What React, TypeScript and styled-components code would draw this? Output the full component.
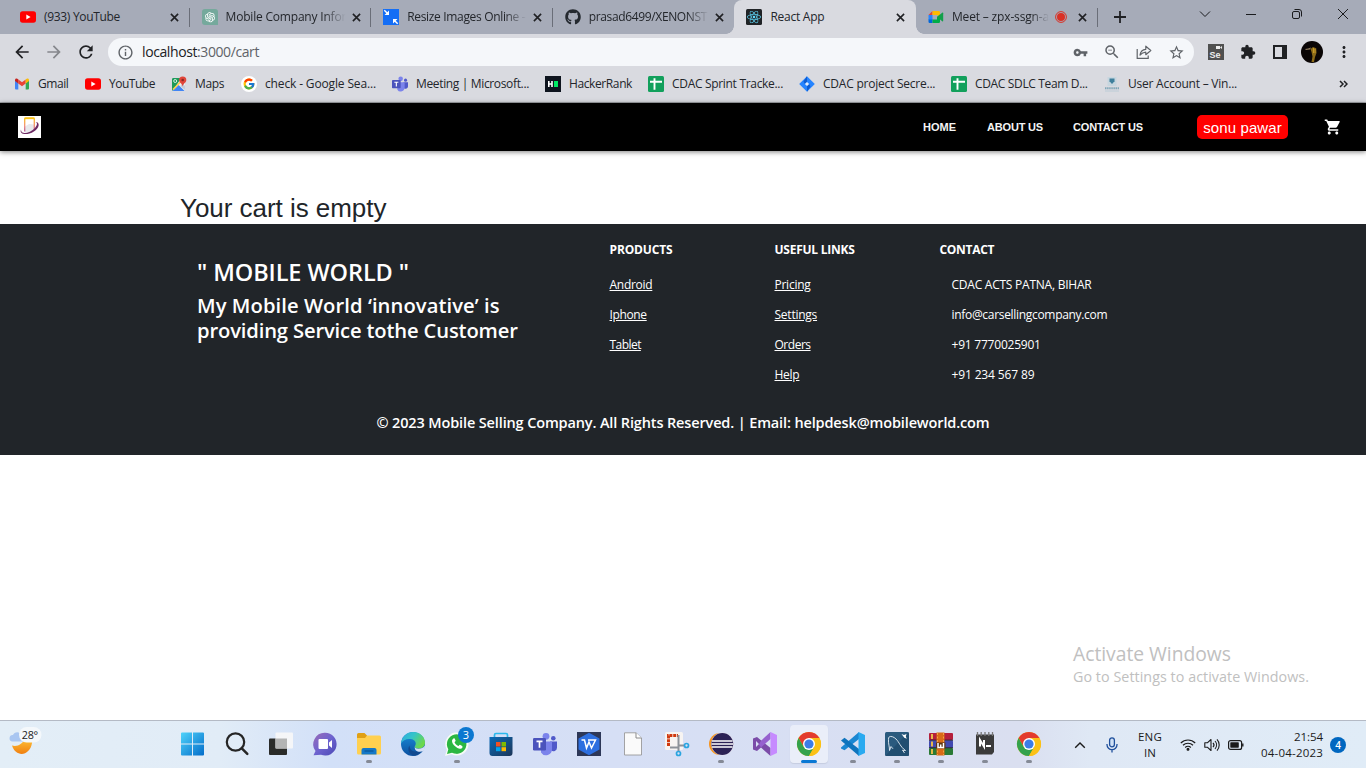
import React from 'react';
import styled, { createGlobalStyle, css } from 'styled-components';
import { FcGoogle } from 'react-icons/fc';
import { FaGithub, FaReact } from 'react-icons/fa';
import { AiOutlineOpenAI } from 'react-icons/ai';
import {
  MdArrowBack, MdArrowForward, MdRefresh, MdInfoOutline, MdVpnKey, MdZoomOut,
  MdStarBorder, MdExtension, MdMoreVert, MdShoppingCart,
} from 'react-icons/md';

const GlobalStyle = createGlobalStyle`
  * { box-sizing: border-box; }
  body { margin: 0; background: #fff; overflow: hidden; }
`;

const ui = `'Open Sans', 'Noto Sans', sans-serif`;
const arial = `'Liberation Sans', Arial, sans-serif`;

const Screen = styled.div`
  display: flex;
  flex-direction: column;
  width: 1366px;
  height: 768px;
  overflow: hidden;
  font-family: ${ui};
`;

/* ---------- browser ---------- */

const TabStrip = styled.div`
  display: flex;
  height: 34px;
  background: #a6abb8;
  padding-left: 8px;
`;

const Tab = styled.div<{ $active?: boolean; $divider?: boolean }>`
  position: relative;
  display: flex;
  align-items: center;
  width: 181.6px;
  height: 34px;
  padding: 0 10.5px 0 12px;
  font-size: 12px;
  color: #23262b;
  svg { flex: none; }
  ${p => p.$active && css`
    background: #d9dae0;
    border-radius: 8px 8px 0 0;
    &::before, &::after {
      content: '';
      position: absolute;
      bottom: 0;
      width: 8px;
      height: 8px;
    }
    &::before { left: -8px; background: radial-gradient(circle at 0 0, transparent 7.5px, #d9dae0 8px); }
    &::after { right: -8px; background: radial-gradient(circle at 100% 0, transparent 7.5px, #d9dae0 8px); }
  `}
  ${p => p.$divider && css`
    background: linear-gradient(#6a6e78, #6a6e78) no-repeat right 0 top 8px / 1px 19px;
  `}
`;

const TabTitle = styled.div<{ $fade?: boolean }>`
  flex: 1;
  min-width: 0;
  height: 20px;
  line-height: 20px;
  margin: 0 4px 0 8px;
  white-space: nowrap;
  ${p => p.$fade && css`
    mask-image: linear-gradient(90deg, #000 80%, transparent 98%);
  `}
`;

const Text = styled.span<{ $ls?: number }>`
  display: inline-block;
  white-space: nowrap;
  letter-spacing: ${p => p.$ls ?? 0}px;
`;

const RecordSlot = styled.div`
  display: flex;
  margin-right: 11px;
`;

const WindowControls = styled.div`
  display: flex;
  margin-left: auto;
`;

const Toolbar = styled.div`
  display: flex;
  align-items: center;
  height: 36px;
  padding: 0 8px 0 12px;
  background: #d9dae0;
  color: #202124;
`;

const ToolSlot = styled.div<{ $w: number; $h?: number; $color?: string }>`
  display: flex;
  align-items: center;
  justify-content: center;
  width: ${p => p.$w}px;
  height: ${p => p.$h ?? 28}px;
  flex: none;
  color: ${p => p.$color || '#202124'};
`;

const Omnibox = styled.div`
  display: flex;
  align-items: center;
  width: 1086px;
  height: 28px;
  padding: 0 2px 0 9px;
  margin-left: 12px;
  margin-right: 6px;
  border-radius: 14px;
  background: #f5f7fa;
  color: #5f6368;
  flex: none;
`;

const Url = styled.div`
  flex: 1;
  padding-left: 8px;
  font-size: 14px;
  line-height: 20px;
  color: #5f6368;
  b { font-weight: 400; color: #202124; }
`;

const Avatar = styled.div`
  width: 22px;
  height: 22px;
  border-radius: 50%;
  overflow: hidden;
  background: #0a0505;
`;

const Bookmarks = styled.div`
  display: flex;
  align-items: center;
  height: 33px;
  padding: 0 0 5px 14px;
  background: #d9dae0;
  border-bottom: 1px solid #a3a5aa;
  font-size: 12px;
  color: #23262b;
`;

const Bookmark = styled.div<{ $w: number }>`
  display: flex;
  align-items: center;
  gap: 8px;
  width: ${p => p.$w}px;
  flex: none;
  line-height: 18px;
  svg { flex: none; }
`;

/* ---------- page ---------- */

const Page = styled.main`
  display: flex;
  flex-direction: column;
  height: 617px;
  background: #fff;
`;

const NavBar = styled.nav`
  display: flex;
  align-items: center;
  height: 48px;
  flex: none;
  padding: 0 24px 0 18px;
  background: #000;
  box-shadow: 0 1px 5px rgba(0, 0, 0, .5);
  font-family: ${arial};
`;

const NavLink = styled.a<{ $w: number }>`
  width: ${p => p.$w}px;
  font-size: 11px;
  font-weight: 700;
  line-height: 16px;
  color: #f4f4f4;
`;

const NavLinks = styled.div`
  display: flex;
  margin-left: auto;
`;

const UserBadge = styled.div`
  display: flex;
  align-items: center;
  justify-content: center;
  width: 91px;
  height: 24px;
  margin-right: 36px;
  border-radius: 5px;
  background: #f00;
  color: #fff;
  font-size: 15px;
`;

const CartTitle = styled.h1`
  margin: 41px 0 0 180px;
  height: 32px;
  font: 400 26px/32px ${arial};
  color: #212529;
`;

const Footer = styled.footer`
  height: 231px;
  flex: none;
  padding-top: 16px;
  background: #212529;
  color: #fff;
`;

const FooterColumns = styled.div`
  display: grid;
  grid-template-columns: 412.5px 165px 165px 300px;
  height: 170px;
  padding-left: 197px;
`;

const Brand = styled.h2`
  margin: 16px 0 0;
  font-size: 23.5px;
  line-height: 32px;
  font-weight: 600;
`;

const Tagline = styled.h3`
  display: flex;
  flex-direction: column;
  align-items: flex-start;
  margin: 5px 0 0;
  font-size: 20.2px;
  line-height: 25px;
  font-weight: 600;
`;

const ColumnHead = styled.h6`
  margin: 0 0 10px;
  font-size: 12px;
  line-height: 20px;
  font-weight: 700;
`;

const FooterLine = styled.div<{ $link?: boolean }>`
  height: 30px;
  line-height: 30px;
  font-size: 12px;
  padding-left: ${p => (p.$link ? 0 : 12)}px;
  span { text-decoration: ${p => (p.$link ? 'underline' : 'none')}; }
`;

const Copyright = styled.div`
  text-align: center;
  margin-top: 3px;
  font-size: 14.5px;
  line-height: 20px;
  font-weight: 600;
`;

const Watermark = styled.div`
  margin: auto 0 33px 1073px;
  color: #c0c0c0;
`;

const WatermarkTitle = styled.div`
  font-size: 19.3px;
  line-height: 24px;
`;

const WatermarkText = styled.div`
  font-size: 14.3px;
  line-height: 21px;
`;

/* ---------- taskbar ---------- */

const Taskbar = styled.div`
  display: flex;
  height: 48px;
  flex: none;
  border-top: 1px solid #b4bac5;
  background: linear-gradient(90deg, #e3eef7 0, #e1ecf7 220px, #d2e0f8 330px, #d5dff6 520px, #d8dff3 800px, #dadff0 1020px, #dfe8f5 1090px, #e0ecf7 1366px);
`;

const Weather = styled.div`
  display: flex;
  width: 171px;
  flex: none;
  padding: 4px 0 0 8px;
`;

const TaskApp = styled.div<{ $active?: boolean; $running?: boolean }>`
  display: flex;
  flex-direction: column;
  align-items: center;
  width: 44px;
  height: 47px;
  flex: none;
  padding-top: 11px;
  position: relative;
  ${p => p.$active && css`
    &::before {
      content: '';
      position: absolute;
      inset: 4px 3px 5px;
      border-radius: 4px;
      background: #eaeef9;
      box-shadow: 0 1px 1px #c6cde0;
    }
  `}
  svg { position: relative; flex: none; overflow: visible; }
  &::after {
    content: '';
    position: relative;
    display: ${p => (p.$active || p.$running ? 'block' : 'none')};
    width: ${p => (p.$active ? 16 : 6)}px;
    height: 3px;
    margin-top: 4px;
    border-radius: 2px;
    background: ${p => (p.$active ? '#0a78d4' : '#858a96')};
  }
`;

const Tray = styled.div`
  display: flex;
  align-items: center;
  margin-left: 16px;
  font-size: 11.5px;
  color: #1b1b1b;
`;

const TraySlot = styled.div<{ $w: number }>`
  display: flex;
  justify-content: center;
  align-items: center;
  width: ${p => p.$w}px;
  flex: none;
  svg { flex: none; }
`;

const TrayStack = styled.div<{ $w: number; $right?: boolean }>`
  display: flex;
  flex-direction: column;
  align-items: ${p => (p.$right ? 'flex-end' : 'center')};
  width: ${p => p.$w}px;
  line-height: 16px;
  flex: none;
`;

const Notification = styled.div`
  width: 16px;
  height: 16px;
  margin-left: 7px;
  border-radius: 50%;
  background: #0067c0;
  color: #fff;
  font-size: 10px;
  font-weight: 600;
  line-height: 16px;
  text-align: center;
`;

/* ---------- icons ---------- */

const YouTube = () => (
  <svg width="16" height="16" viewBox="0 0 16 16"><rect y="2.3" width="16" height="11.4" rx="2.6" fill="#f00" /><path d="M6.3 5.6v4.8L10.6 8z" fill="#fff" /></svg>
);
const OpenAI = () => (
  <svg width="16" height="16" viewBox="0 0 16 16"><path d="M3 0h10a3 3 0 0 1 3 3v13H3a3 3 0 0 1-3-3V3a3 3 0 0 1 3-3z" fill="#75a99c" /><g color="#fff"><AiOutlineOpenAI x="1.5" y="1.5" size={13} /></g></svg>
);
const Resize = () => (
  <svg width="16" height="16" viewBox="0 0 16 16"><rect width="16" height="16" fill="#146ef5" /><path d="M1.300 1.300l3 3M14.700 14.700l-3-3" stroke="#fff" strokeWidth="1.500" /><path d="M6 1.500V6H1.500zM10 14.500V10h4.500z" fill="#fff" /></svg>
);
const ReactIcon = () => (
  <svg width="16" height="16" viewBox="0 0 16 16"><rect width="16" height="16" rx="1.500" fill="#202326" /><g color="#61dafb"><FaReact x="1" y="1" size={14} /></g></svg>
);
const Meet = () => (
  <svg width="16" height="16" viewBox="0 0 16 16">
    <path d="M.5 6 4.5 2v4z" fill="#ea4335" /><path d="M.5 6h4v5h-4z" fill="#2684fc" />
    <path d="M.5 10.500h4V14H1.700A1.200 1.200 0 0 1 .5 12.800z" fill="#0066da" /><path d="M4.500 2h6.300A1.200 1.200 0 0 1 12 3.200V8L9 6H4.500z" fill="#ffba00" />
    <path d="M4.500 10.500H9V8l3-2.400v7.200a1.200 1.200 0 0 1-1.200 1.200H4.500z" fill="#00ac47" /><path d="M9 8l5.200-4.300c.5-.4 1-.1 1 .5v7.600c0 .6-.5.900-1 .5z" fill="#12a04a" />
  </svg>
);
const Record = () => (
  <svg width="12" height="12" viewBox="0 0 12 12"><circle cx="6" cy="6" r="5.400" fill="none" stroke="#d93025" /><circle cx="6" cy="6" r="4" fill="#d93025" /></svg>
);
const Close = () => (
  <svg width="9" height="9" viewBox="0 0 9 9"><path d="M.9.900l7.200 7.200M8.100.9.900 8.100" stroke="#202124" strokeWidth="1.600" /></svg>
);
const Plus = () => (
  <svg width="12" height="12" viewBox="0 0 12 12"><path d="M6 0v12M0 6h12" stroke="#202124" strokeWidth="1.800" /></svg>
);
const Gmail = () => (
  <svg width="16" height="16" viewBox="0 0 16 16">
    <path d="M1 4.500 4.300 7v6.500H2a1 1 0 0 1-1-1z" fill="#4285f4" /><path d="M15 4.500 11.700 7v6.500H14a1 1 0 0 0 1-1z" fill="#34a853" />
    <path d="M4.300 3.500 8 6.300l3.700-2.800v4L8 10.300 4.300 7.500z" fill="#ea4335" /><path d="M1 4.300c0-1.700 1.700-2.400 3.300-.8v4L1 5z" fill="#c5221f" /><path d="M15 4.300c0-1.700-1.700-2.400-3.300-.8v4L15 5z" fill="#fbbc04" />
  </svg>
);
const MapsIcon = () => (
  <svg width="16" height="16" viewBox="0 0 16 16">
    <rect x="1" y="2" width="13" height="13" rx="1.300" fill="#f1f1f1" /><path d="M1 3.200A1.200 1.200 0 0 1 2.200 2h8L2 14.500H1z" fill="#1e9a5a" />
    <path d="M1.500 15 7.600 9l6 6z" fill="#4285f4" /><path d="M9.300 10l2.500-3 2.200 3v4z" fill="#c4ccd8" /><path d="M2 13.500 9.500 6" stroke="#ffd04b" strokeWidth="1.600" />
    <circle cx="4.200" cy="5" r="1.500" fill="none" stroke="#fff" strokeWidth=".8" />
    <path d="M11.700.4a3.600 3.600 0 0 0-3.600 3.700c0 2.700 3 3.400 3.600 6.400.6-3 3.600-3.700 3.600-6.400A3.600 3.600 0 0 0 11.700.4z" fill="#e0463a" /><circle cx="11.700" cy="4" r="1.300" fill="#8c2a22" />
  </svg>
);
const GoogleIcon = () => (
  <svg width="16" height="16" viewBox="0 0 16 16"><circle cx="8" cy="8" r="8" fill="#fff" /><FcGoogle x="1.500" y="1.500" size={13} /></svg>
);
const TeamsIcon = ({ size = 16 }: { size?: number }) => (
  <svg width={size} height={size} viewBox="0 0 24 24">
    <circle cx="20.300" cy="6.200" r="2.300" fill="#5059c9" /><path d="M17 9.500h7v6.200a3.600 3.600 0 0 1-6 2.600z" fill="#5059c9" />
    <circle cx="13" cy="4.300" r="3.400" fill="#7b83eb" /><path d="M8 9.500h11v7.500a6 6 0 0 1-11 3.500z" fill="#7b83eb" />
    <rect y="6" width="13" height="12.500" rx="1.200" fill="#4b53bc" /><path d="M3.500 9.300h6M6.500 9.300v6.400" stroke="#fff" strokeWidth="1.700" />
  </svg>
);
const HackerRank = () => (
  <svg width="16" height="16" viewBox="0 0 16 16"><rect width="16" height="16" fill="#0e141e" /><path d="M3.800 5v6M7 5v6M3.800 8H7" stroke="#fff" strokeWidth="1.600" /><rect x="9" y="5" width="4" height="6" fill="#00ea64" /></svg>
);
const SheetIcon = () => (
  <svg width="16" height="16" viewBox="0 0 16 16"><rect width="16" height="16" rx="1.500" fill="#12a05c" /><path d="M2 5.700h12M6.500 2.300v11.500" stroke="#fff" strokeWidth="1.900" /></svg>
);
const Jira = () => (
  <svg width="16" height="16" viewBox="0 0 16 16"><path d="M8 .2 15.800 8 8 15.800.2 8z" fill="#2684ff" /><path d="M8 .2 4.500 5.500 6 8l2-2zM8 15.800l3.500-5.300L10 8l-2 2z" fill="#0f5cd0" /><path d="M8 5.900 10.100 8 8 10.100 5.900 8z" fill="#e4ecfa" /></svg>
);
const Vin = () => (
  <svg width="16" height="16" viewBox="0 0 16 16"><rect x="3.500" y="1" width="9" height="9" fill="#c7d6df" /><path d="M5.500 2.500h5v2.700L8 8 5.500 5.200z" fill="#3f7f9c" /><path d="M1 12.300h14" stroke="#80a7b8" strokeWidth="2" strokeDasharray="1.500 .6" /><path d="M1 15h14" stroke="#bccbd6" /></svg>
);
const Share = () => (
  <svg width="16" height="16" viewBox="0 0 16 16" fill="none" stroke="#5f6368" strokeWidth="1.200"><path d="M1.200 5v9.400h11V11.500" /><path d="M4 11c.5-3.800 2.700-5.500 5.800-5.700V2.200l5 4.300-5 4.200V8.200C7.200 8.400 5.500 9.400 4 11z" strokeLinejoin="round" /></svg>
);
const Selenium = () => (
  <svg width="16" height="16" viewBox="0 0 16 16"><rect width="16" height="16" fill="#505050" /><rect x="8" y="2" width="4" height="3" fill="#eee" /><path d="M12 3.500 14 2v3z" fill="#eee" /><text x="1.500" y="14" fontSize="9" fontWeight="700" fill="#eee" fontFamily="Liberation Sans, sans-serif">Se</text></svg>
);
const SidePanel = () => (
  <svg width="14" height="14" viewBox="0 0 14 14"><rect x="1" y="1" width="12" height="12" fill="none" stroke="#202124" strokeWidth="2" /><rect x="9" width="5" height="14" fill="#202124" /></svg>
);
const Face = () => (
  <svg width="22" height="22" viewBox="0 0 22 22"><path d="M9.500 8 12 6l3.200 1.200.3 4.800-1.500 4L13 21h-2.500l1-5.500-1-4.500z" fill="#8b6a18" /><path d="M4 8l3-.5 3-1-1 2-4 .5z" fill="#8e7a5c" /><path d="M12.500 7v5M14 8v4" stroke="#c89a28" /></svg>
);
const Win = ({ kind }: { kind: 'chev' | 'min' | 'restore' | 'close' }) => (
  <svg width="12" height="12" viewBox="0 0 12 12" fill="none" stroke="#1a1b1e" strokeWidth="1">
    {kind === 'chev' && <path d="M1 3.500l5 5 5-5" />}
    {kind === 'min' && <path d="M1 6.500h10" />}
    {kind === 'restore' && <><rect x="1.500" y="3.500" width="7" height="7" rx="1.500" /><path d="M3.500 1.500H8a2.500 2.500 0 0 1 2.500 2.500v4.500" /></>}
    {kind === 'close' && <path d="M1 1l10 10M11 1 1 11" />}
  </svg>
);
const Overflow = () => (
  <svg width="9" height="8" viewBox="0 0 9 8"><path d="M1 1l3 3-3 3M5 1l3 3-3 3" fill="none" stroke="#202124" strokeWidth="1.500" /></svg>
);

const SiteLogo = () => (
  <svg width="23" height="22" viewBox="0 0 23 22">
    <defs><linearGradient id="phone" x1="0" y1="0" x2="0" y2="1"><stop stopColor="#fcc419" /><stop offset=".6" stopColor="#f08a7c" /><stop offset="1" stopColor="#b05a9a" /></linearGradient></defs>
    <rect width="23" height="22" fill="#fff" /><path d="M7 10.500 11 8l5 .5v6L11 17l-4-1z" fill="#e8e9ec" />
    <path d="M6.700 15.500V3.300Q6.700 2.200 7.800 2.200h7.400q1.100 0 1.100 1.100V13" fill="none" stroke="url(#phone)" strokeWidth="1.300" /><path d="M6.500 2.300h10" stroke="#fcc419" strokeWidth="1.700" />
    <path d="M3 13.500c-1.600 3.700 2.500 5.700 8.500 4 6.500-1.900 10.800-7.500 8.600-10.500-.6-.8-1.500-1-2.600-.9 2.100.7 2 3-.5 5.800-3.500 4-10 6-12.500 4.600C3.500 15.900 3 15 3 13.500z" fill="#6d2a63" />
  </svg>
);

const WeatherIcon = () => (
  <svg width="36" height="32" viewBox="0 0 36 32">
    <defs><linearGradient id="moon" x1="0" y1="0" x2="0" y2="1"><stop stopColor="#ffc83d" /><stop offset="1" stopColor="#f08010" /></linearGradient></defs>
    <path d="M4 20.500c5 1.500 11-1 13-8 5-1 8 1 7 5.500-2 13-16 15-20 2.500z" fill="url(#moon)" />
    <path d="M4.500 16.500a3.200 3.200 0 0 1 .5-6.400C6 6.500 12 6 13.500 10H16v6.500z" fill="#a9c6f1" />
    <rect x="11" y="2" width="22.500" height="15.500" rx="7.700" fill="#f4f8fb" />
    <text x="13.700" y="14" fontSize="10.800" fill="#1b1b1b" textLength="16.500" fontFamily="Open Sans, sans-serif">28°</text>
  </svg>
);
const Ic = ({ children }: { children: React.ReactNode }) => <svg width="24" height="24" viewBox="0 0 24 24">{children}</svg>;

const Start = () => (
  <Ic><defs><linearGradient id="win" gradientUnits="userSpaceOnUse" x1="0" y1="0" x2="24" y2="24"><stop stopColor="#50d4fb" /><stop offset="1" stopColor="#0069c8" /></linearGradient></defs>
    <path d="M0 1.500a1 1 0 0 1 1-1h10v11H0zM12 .5h10a1 1 0 0 1 1 1v10H12zM0 12.500h11v11H1a1 1 0 0 1-1-1zM12 12.500h11v10a1 1 0 0 1-1 1H12z" fill="url(#win)" /></Ic>
);
const Search = () => (
  <Ic><circle cx="10.500" cy="10" r="8.700" fill="#e4edf8" fillOpacity=".5" stroke="#252525" strokeWidth="2.200" /><path d="M16.800 16.300l5.500 5.500" stroke="#252525" strokeWidth="2.500" strokeLinecap="round" /></Ic>
);
const TaskView = () => (
  <Ic><rect x="0" y="6.500" width="18" height="16.500" rx="1" fill="#2a2b29" /><rect x="6.500" y=".5" width="17.500" height="16" rx="1" fill="#f5f6f8" /><rect x="6.500" y="6.500" width="11.500" height="10" fill="#b3b4b4" /></Ic>
);
const Chat = () => (
  <Ic><defs><linearGradient id="chat" x1="0" y1="0" x2="1" y2="1"><stop stopColor="#9a6cb8" /><stop offset=".5" stopColor="#6d63cf" /><stop offset="1" stopColor="#4b49b5" /></linearGradient></defs>
    <path d="M12 .8a11.400 11.400 0 1 1-4 22l-7.500.5 2-4.300A11.400 11.400 0 0 1 12 .8z" fill="url(#chat)" /><rect x="5.500" y="7" width="9.500" height="10" rx="1" fill="#fff" /><path d="M16 10.500 19 8v8l-3-2.500z" fill="#fff" /></Ic>
);
const Explorer = () => (
  <Ic><path d="M0 2.500A1.500 1.500 0 0 1 1.500 1h6L10 3.500V7H0z" fill="#e0a015" /><path d="M0 6h8l2-2.500h12.500A1.500 1.500 0 0 1 24 5v16a1.500 1.500 0 0 1-1.500 1.500h-21A1.500 1.500 0 0 1 0 21z" fill="#ffd050" /><path d="M4.500 22.500V18a2 2 0 0 1 2-2h11a2 2 0 0 1 2 2v4.500z" fill="#1478c8" /><path d="M7.500 19h9" stroke="#0b5a9c" strokeWidth="1.400" /></Ic>
);
const Edge = () => (
  <Ic><defs><linearGradient id="eg" x1="0" y1="0" x2="1" y2=".5"><stop stopColor="#2fa9e0" /><stop offset=".5" stopColor="#35c4c9" /><stop offset="1" stopColor="#6bd84c" /></linearGradient>
    <linearGradient id="eb" x1="0" y1="0" x2="0" y2="1"><stop stopColor="#1a8fdc" /><stop offset="1" stopColor="#0c50a0" /></linearGradient></defs>
    <circle cx="12" cy="12" r="12" fill="url(#eb)" /><path d="M0 11.500C1 4.500 6 0 12 0c7 0 12 5 12 10.500 0 4-3 6-6.500 6-2.700 0-4.500-1-3.500-2.500 1.800-2.500.5-6.500-4.500-7C5.500 6.500 1.500 8.500 0 11.500z" fill="url(#eg)" />
    <path d="M8.500 13.500c0 5.500 5.500 8 13 4.500-1.500 2.500-4.500 4.800-7.500 5.700-5-.7-8.500-5.200-5.500-10.200z" fill="#11498f" /><path d="M13.800 14.200c-.6 1.600 1.200 2.500 3.700 2.500 2.500 0 5-1 6.500-3.200 0 3-.8 4.500-2 5.700-4 1.200-9 .3-8.200-5z" fill="#d5dff6" /></Ic>
);
const WhatsApp = () => (
  <Ic><path d="M0 24l1.800-6.200A11.600 11.600 0 1 1 6.500 22.300z" fill="#f6fbf6" /><path d="M2 22l1.300-4.800A9.800 9.800 0 1 1 7 20.700z" fill="#2cb742" /><path d="M8.500 6.500c-2.600 1.600-1.500 4.800 1.300 7.600 2.800 2.700 6 3.800 7.600 1.300.5-1-.3-1.500-2.400-2.600-.7-.3-1 1.400-1.700 1.100-1.800-.8-3-2-3.700-3.500-.2-.6 1.400-1.100 1-1.900-1-2.200-1.200-2.500-2.100-2z" fill="#fff" />
    <circle cx="21" cy="3" r="8" fill="#0c78d0" /><text x="21" y="7" textAnchor="middle" fontSize="11" fill="#fff" fontFamily="Open Sans, sans-serif">3</text></Ic>
);
const Store = () => (
  <Ic><defs><linearGradient id="st" x1="0" y1="0" x2="1" y2="1"><stop stopColor="#0a6bb8" /><stop offset="1" stopColor="#1d3557" /></linearGradient></defs>
    <path d="M5.500 6V3Q5.500 1.500 7 1.500h10q1.500 0 1.500 1.500v3" fill="none" stroke="#2bb8ec" strokeWidth="1.700" /><path d="M.5 5h23v16a3 3 0 0 1-3 3h-17a3 3 0 0 1-3-3z" fill="url(#st)" />
    <path d="M7 10h4.500v4.500H7z" fill="#f25022" /><path d="M12.500 10H17v4.500h-4.500z" fill="#7fba00" /><path d="M7 15.200h4.500v4H7z" fill="#00a4ef" /><path d="M12.500 15.200H17v4h-4.500z" fill="#ffb900" /></Ic>
);
const Wps = () => (
  <Ic><rect width="24" height="24" fill="#2d3757" /><path d="M12 .8 22.500 6.500v11L12 23.200 1.500 17.500v-11z" fill="#2d6fe0" /><path d="M4.500 8h3l2 8L12 10l2.500 6L18.500 8H11" fill="none" stroke="#fff" strokeWidth="1.500" /></Ic>
);
const FileIcon = () => (
  <Ic><path d="M3.500.8H15L20.500 6v17h-17z" fill="#fafafa" stroke="#9a9a9a" strokeWidth=".9" /><path d="M15 .8V6h5.500" fill="#fff" stroke="#8a8a8a" /></Ic>
);
const Snip = () => (
  <Ic><rect width="18" height="18" rx="1.500" fill="#f7f4f2" /><path d="M3.500 14V3.500H13" fill="none" stroke="#d03a10" strokeWidth="3" strokeDasharray="3 .8" /><path d="M13.500 3v12.500H5M13.500 15v4M13 13.500h6" fill="none" stroke="#8d9299" strokeWidth="2" /><circle cx="21.500" cy="13.500" r="2" fill="none" stroke="#2aa5e0" strokeWidth="1.700" /><circle cx="13.500" cy="21.500" r="2" fill="none" stroke="#2aa5e0" strokeWidth="1.700" /></Ic>
);
const Eclipse = () => (
  <Ic><circle cx="11" cy="12" r="11" fill="#f7941e" /><circle cx="13.500" cy="12" r="11.400" fill="#e5e2ef" /><circle cx="13.300" cy="12" r="10.900" fill="#2c2255" /><path d="M3 9h20.500M2.500 12H24M3 15h20.500" stroke="#fff" strokeWidth="1.300" /></Ic>
);
const VS = () => (
  <Ic><path d="M0 6.500 4 5l13.500 11v8L8 15.500 4 19 0 17.500zM3 9v6l3-3z" fill="#7b4ca8" fillRule="evenodd" /><path d="M17.500 0 8 8.700l-2 3.800 2 3L17.500 7z" fill="#9661cf" /><path d="M17.500 0 24 3v18l-6.500 3z" fill="#c68bff" /></Ic>
);
const Chrome = () => (
  <Ic><circle cx="12" cy="12" r="12" fill="#fbc116" /><path d="M1.600 6A12 12 0 0 1 22.400 6H12l-5.200 9z" fill="#e33b2e" /><path d="M1.600 6A12 12 0 0 0 12 24l5.200-9L12 12l-5.200 3z" fill="#34a24c" /><path d="M17.200 15 12 24A12 12 0 0 0 22.400 6H12z" fill="#fbc116" /><circle cx="12" cy="12" r="6" fill="#fff" /><circle cx="12" cy="12" r="4.600" fill="#3b7de8" /></Ic>
);
const VSCode = () => (
  <Ic><path d="M18 0v7L3.500 18.300 0 16.500v-1z" fill="#1b87d2" /><path d="M0 8.500 3.500 5.700 18 17v7z" fill="#0f74bd" /><path d="M17.500 0 24 3v18l-6.500 3z" fill="#2aaaf0" /></Ic>
);
const MySql = () => (
  <Ic><rect width="24" height="24" rx="1.500" fill="#2a5a7e" /><path d="M0 24h24V0z" fill="#1c4668" opacity=".6" /><path d="M4.500 18.500c.3-3-1.500-7.500-1-11C3 3 8 4 11 7c3.500 3.500 4 7.500 9.500 11.500M20.500 18.500l-3-.3M19.500 21l-2-3M4.500 18.500 6 14.500l2 2.300" fill="none" stroke="#e6eef5" strokeWidth=".9" /><path d="M16.500 2l2.500 1 2.500-1-.7 2.500 1 2.200-2.500-.9z" fill="#fff" /></Ic>
);
const WinRar = () => (
  <Ic><rect y="1" width="24" height="7" rx="1" fill="#b51f3c" /><rect x="0" y="8.500" width="24" height="7" rx="1" fill="#4149b0" /><rect x="0" y="16" width="24" height="7" rx="1" fill="#2a7a35" /><path d="M0 8.200h24M0 15.700h24" stroke="#1e1a35" /><path d="M3 2v20" stroke="#e6b94a" strokeWidth="2" strokeDasharray="5 2.500" /><rect x="7.500" y=".5" width="8" height="23" fill="#d96a16" /><path d="M8.500 1v22M14.500 1v22" stroke="#f3a33f" strokeDasharray="2 1.500" /><rect x="7" y="10.500" width="9.500" height="6" fill="#5b3512" /><path d="M9 11v4.500h5.500V11M11.700 12.500v3" stroke="#fff" strokeWidth="1.500" fill="none" /></Ic>
);
const NIcon = () => (
  <Ic><path d="M3 2.500h18V20l-2 2.500H3z" fill="#3b3b3b" /><path d="M4.500 0v4M8.200 0v4M12 0v4M15.800 0v4M19.500 0v4" stroke="#777" strokeWidth="1.300" /><path d="M7 14.500V8l4 6.500V8M13 14h5" stroke="#fff" strokeWidth="2" fill="none" /></Ic>
);

const ChevronUp = () => <svg width="12" height="8" viewBox="0 0 12 8"><path d="M1.200 6.800 6 2l4.800 4.800" fill="none" stroke="#1b1b1b" strokeWidth="1.400" /></svg>;
const Mic = () => <svg width="12" height="16" viewBox="0 0 12 16" fill="none" stroke="#1f4f9c" strokeWidth="1.300"><rect x="3.600" y=".8" width="4.800" height="9" rx="2.400" fill="#cfe0f6" /><path d="M1 7v.800a5 4.800 0 0 0 10 0V7M6 12.500V15.500" /></svg>;
const Wifi = () => <svg width="16" height="13" viewBox="0 0 16 13" fill="none" stroke="#1b1b1b" strokeWidth="1.200"><path d="M.8 5a10.200 10.200 0 0 1 14.400 0M3 7.300a7.100 7.100 0 0 1 10 0M5.200 9.500a4 4 0 0 1 5.600 0" /><circle cx="8" cy="11.300" r=".9" fill="#1b1b1b" /></svg>;
const Speaker = () => <svg width="17" height="14" viewBox="0 0 17 14" fill="none" stroke="#1b1b1b" strokeWidth="1.100"><path d="M.8 4.800h2.500L7 1.500v11L3.300 9.200H.800zM9 4.800a3.200 3.200 0 0 1 0 4.400M11 3a6 6 0 0 1 0 8M13 1.300a8.500 8.500 0 0 1 0 11.400" strokeLinejoin="round" /></svg>;
const Battery = () => <svg width="16" height="10" viewBox="0 0 16 10"><rect x=".6" y=".6" width="13" height="8.800" rx="2" fill="none" stroke="#1b1b1b" strokeWidth="1.200" /><rect x="2.300" y="2.300" width="8.500" height="5.400" rx=".6" fill="#1b1b1b" /><path d="M14.800 3.500v3" stroke="#1b1b1b" strokeWidth="1.400" /></svg>;

/* ---------- data ---------- */

const tabs = [
  { icon: <YouTube />, title: '(933) YouTube', ls: -0.317, divider: true },
  { icon: <OpenAI />, title: 'Mobile Company Infor', ls: -0.2, divider: true, fade: true },
  { icon: <Resize />, title: 'Resize Images Online -', ls: -0.33, divider: true, fade: true },
  { icon: <FaGithub size={16} color="#24292f" />, title: 'prasad6499/XENONST', ls: -0.36, fade: true },
  { icon: <ReactIcon />, title: 'React App', ls: -0.248, active: true },
  { icon: <Meet />, title: 'Meet – zpx-ssgn-a', ls: -0.161, divider: true, fade: true, rec: true },
];

const bookmarks = [
  { icon: <Gmail />, label: 'Gmail', w: 71, ls: -0.45 },
  { icon: <YouTube />, label: 'YouTube', w: 86, ls: -0.478 },
  { icon: <MapsIcon />, label: 'Maps', w: 70, ls: -0.35 },
  { icon: <GoogleIcon />, label: 'check - Google Sea...', w: 151, ls: -0.143 },
  { icon: <TeamsIcon />, label: 'Meeting | Microsoft...', w: 153, ls: -0.349 },
  { icon: <HackerRank />, label: 'HackerRank', w: 103, ls: -0.395 },
  { icon: <SheetIcon />, label: 'CDAC Sprint Tracke...', w: 151, ls: -0.313 },
  { icon: <Jira />, label: 'CDAC project Secre...', w: 152, ls: -0.23 },
  { icon: <SheetIcon />, label: 'CDAC SDLC Team D...', w: 153, ls: -0.345 },
  { icon: <Vin />, label: 'User Account – Vin...', w: 235, ls: -0.227 },
];

const products = [
  { label: 'Android', ls: -0.28 },
  { label: 'Iphone', ls: -0.36 },
  { label: 'Tablet', ls: -0.55 },
];

const usefulLinks = [
  { label: 'Pricing', ls: -0.25 },
  { label: 'Settings', ls: -0.24 },
  { label: 'Orders', ls: -0.48 },
  { label: 'Help', ls: -0.25 },
];

const contacts = [
  { label: 'CDAC ACTS PATNA, BIHAR', ls: -0.24 },
  { label: 'info@carsellingcompany.com', ls: -0.31 },
  { label: '+91 7770025901', ls: -0.22 },
  { label: '+91 234 567 89', ls: -0.14 },
];

const apps = [
  { icon: <Start /> }, { icon: <Search /> }, { icon: <TaskView /> }, { icon: <Chat /> },
  { icon: <Explorer />, running: true }, { icon: <Edge /> }, { icon: <WhatsApp />, running: true },
  { icon: <Store /> }, { icon: <TeamsIcon size={24} /> }, { icon: <Wps /> }, { icon: <FileIcon /> }, { icon: <Snip /> },
  { icon: <Eclipse />, running: true }, { icon: <VS /> }, { icon: <Chrome />, active: true },
  { icon: <VSCode />, running: true }, { icon: <MySql />, running: true }, { icon: <WinRar />, running: true },
  { icon: <NIcon />, running: true }, { icon: <Chrome />, running: true },
];

export default function App() {
  return (
    <Screen>
      <GlobalStyle />
      <TabStrip>
        {tabs.map(t => (
          <Tab key={t.title} $active={t.active} $divider={t.divider}>
            {t.icon}
            <TabTitle $fade={t.fade}><Text $ls={t.ls}>{t.title}</Text></TabTitle>
            {t.rec && <RecordSlot><Record /></RecordSlot>}
            <Close />
          </Tab>
        ))}
        <ToolSlot $w={44} $h={34}><Plus /></ToolSlot>
        <WindowControls>
          <ToolSlot $w={46}><Win kind="chev" /></ToolSlot>
          <ToolSlot $w={46}><Win kind="min" /></ToolSlot>
          <ToolSlot $w={46}><Win kind="restore" /></ToolSlot>
          <ToolSlot $w={46}><Win kind="close" /></ToolSlot>
        </WindowControls>
      </TabStrip>
      <Toolbar>
        <ToolSlot $w={20}><MdArrowBack size={20} /></ToolSlot>
        <ToolSlot $w={44} $color="#85878c"><MdArrowForward size={20} /></ToolSlot>
        <ToolSlot $w={20}><MdRefresh size={20} /></ToolSlot>
        <Omnibox>
          <MdInfoOutline size={17} />
          <Url><Text $ls={-0.405}><b>localhost</b>:3000/cart</Text></Url>
          <ToolSlot $w={32} $color="#5f6368"><MdVpnKey size={15} /></ToolSlot>
          <ToolSlot $w={32} $color="#5f6368"><MdZoomOut size={18} /></ToolSlot>
          <ToolSlot $w={32} $color="#5f6368"><Share /></ToolSlot>
          <ToolSlot $w={32} $color="#5f6368"><MdStarBorder size={17} /></ToolSlot>
        </Omnibox>
        <ToolSlot $w={32}><Selenium /></ToolSlot>
        <ToolSlot $w={32}><MdExtension size={16} /></ToolSlot>
        <ToolSlot $w={32}><SidePanel /></ToolSlot>
        <ToolSlot $w={32}><Avatar><Face /></Avatar></ToolSlot>
        <ToolSlot $w={32}><MdMoreVert size={18} /></ToolSlot>
      </Toolbar>
      <Bookmarks>
        {bookmarks.map(b => (
          <Bookmark key={b.label} $w={b.w}>{b.icon}<Text $ls={b.ls}>{b.label}</Text></Bookmark>
        ))}
        <Overflow />
      </Bookmarks>
      <Page>
        <NavBar>
          <SiteLogo />
          <NavLinks>
            <NavLink $w={64}><Text>HOME</Text></NavLink>
            <NavLink $w={86}><Text $ls={-0.182}>ABOUT US</Text></NavLink>
            <NavLink $w={124}><Text $ls={-0.13}>CONTACT US</Text></NavLink>
          </NavLinks>
          <UserBadge><Text $ls={0.12}>sonu pawar</Text></UserBadge>
          <MdShoppingCart size={18} color="#fff" />
        </NavBar>
        <CartTitle><Text $ls={-0.04}>Your cart is empty</Text></CartTitle>
        <Footer>
          <FooterColumns>
            <div>
              <Brand><Text $ls={-0.08}>" MOBILE WORLD "</Text></Brand>
              <Tagline>
                <Text $ls={0.07}>My Mobile World ‘innovative’ is</Text>
                <Text $ls={-0.15}>providing Service tothe Customer</Text>
              </Tagline>
            </div>
            <div>
              <ColumnHead><Text $ls={-0.16}>PRODUCTS</Text></ColumnHead>
              {products.map(l => <FooterLine key={l.label} $link><Text $ls={l.ls}>{l.label}</Text></FooterLine>)}
            </div>
            <div>
              <ColumnHead><Text $ls={-0.24}>USEFUL LINKS</Text></ColumnHead>
              {usefulLinks.map(l => <FooterLine key={l.label} $link><Text $ls={l.ls}>{l.label}</Text></FooterLine>)}
            </div>
            <div>
              <ColumnHead><Text $ls={-0.3}>CONTACT</Text></ColumnHead>
              {contacts.map(l => <FooterLine key={l.label}><Text $ls={l.ls}>{l.label}</Text></FooterLine>)}
            </div>
          </FooterColumns>
          <Copyright><Text $ls={-0.138}>© 2023 Mobile Selling Company. All Rights Reserved. | Email: helpdesk@mobileworld.com</Text></Copyright>
        </Footer>
        <Watermark>
          <WatermarkTitle><Text $ls={-0.02}>Activate Windows</Text></WatermarkTitle>
          <WatermarkText><Text $ls={0.05}>Go to Settings to activate Windows.</Text></WatermarkText>
        </Watermark>
      </Page>
      <Taskbar>
        <Weather><WeatherIcon /></Weather>
        {apps.map((a, i) => <TaskApp key={i} $active={a.active} $running={a.running}>{a.icon}</TaskApp>)}
        <Tray>
          <TraySlot $w={26}><ChevronUp /></TraySlot>
          <TraySlot $w={38}><Mic /></TraySlot>
          <TrayStack $w={38}><Text $ls={0.193}>ENG</Text><Text $ls={0.063}>IN</Text></TrayStack>
          <TraySlot $w={38}><Wifi /></TraySlot>
          <TraySlot $w={10}><Speaker /></TraySlot>
          <TraySlot $w={38}><Battery /></TraySlot>
          <TrayStack $w={68} $right><Text $ls={-0.066}>21:54</Text><Text $ls={0.198}>04-04-2023</Text></TrayStack>
          <Notification>4</Notification>
        </Tray>
      </Taskbar>
    </Screen>
  );
}
